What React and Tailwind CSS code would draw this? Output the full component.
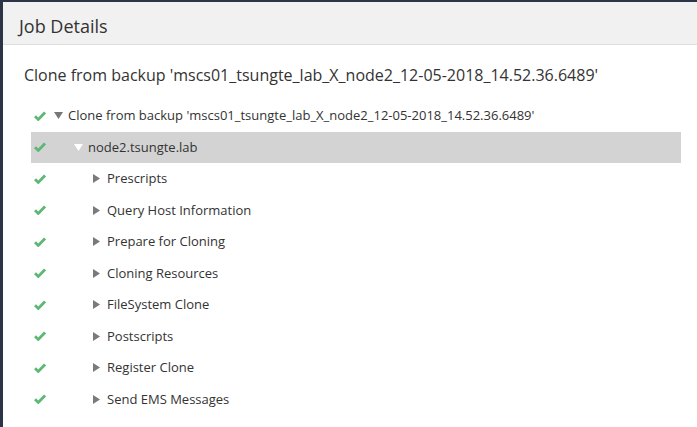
import React from "react";

const Check = () => (
  <svg width="12" height="10" viewBox="0 0 12 10" className="shrink-0">
    <path d="M1 5.2 L4.3 8.4 L11 1.4" fill="none" stroke="#5cb874" strokeWidth="2.8" strokeLinejoin="miter" />
  </svg>
);

const Down = ({ color }) => (
  <svg width="9" height="7" viewBox="0 0 9 7" className="shrink-0">
    <path d="M0 0 L9 0 L4.5 7 Z" fill={color} />
  </svg>
);

const Right = () => (
  <svg width="7" height="9" viewBox="0 0 7 9" className="shrink-0">
    <path d="M0 0 L7 4.5 L0 9 Z" fill="#7a7a7a" />
  </svg>
);

const children = [
  "Prescripts",
  "Query Host Information",
  "Prepare for Cloning",
  "Cloning Resources",
  "FileSystem Clone",
  "Postscripts",
  "Register Clone",
  "Send EMS Messages",
];

export default function App() {
  const name = "Clone from backup 'mscs01_tsungte_lab_X_node2_12-05-2018_14.52.36.6489'";
  return (
    <div
      className="w-[697px] h-[427px] bg-[#2c3546] pt-[2px] pl-[3px] overflow-hidden"
      style={{ fontFamily: "'Open Sans', 'Liberation Sans', sans-serif" }}
    >
      <div className="h-full bg-white flex flex-col">
        <div className="h-[43px] bg-[#f1f1f1] border-b border-[#dedede] flex items-center pt-[6px] pl-[16px] text-[18px] text-[#333]">
          Job Details
        </div>
        <div className="pl-[21px] pt-[17px] text-[16px] text-[#333] leading-[26px]">{name}</div>
        <div className="mt-[12px] pl-[28px] pr-[16px] text-[13px] text-[#333]">
          <div className="h-[31.5px] flex items-center">
            <div className="w-[12px] ml-[3px]"><Check /></div>
            <div className="ml-[8px]"><Down color="#777" /></div>
            <span className="ml-[5px]">{name}</span>
          </div>
          <div className="h-[31.5px] flex items-center bg-[#d3d3d3]">
            <div className="w-[12px] ml-[3px]"><Check /></div>
            <div className="ml-[28px]"><Down color="#ffffff" /></div>
            <span className="ml-[5px]">node2.tsungte.lab</span>
          </div>
          {children.map((c) => (
            <div key={c} className="h-[31.5px] flex items-center">
              <div className="w-[12px] ml-[3px]"><Check /></div>
              <div className="ml-[47px]"><Right /></div>
              <span className="ml-[7px]">{c}</span>
            </div>
          ))}
        </div>
      </div>
    </div>
  );
}
